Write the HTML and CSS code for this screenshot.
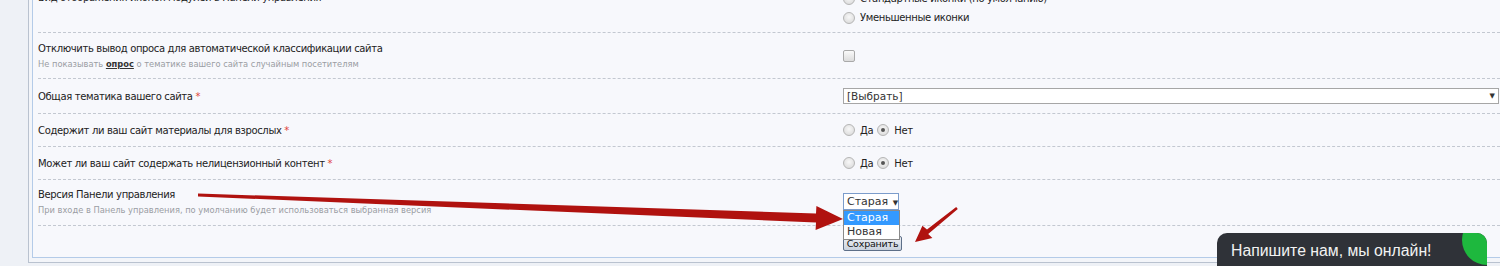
FILE: index.html
```html
<!DOCTYPE html>
<html lang="ru">
<head>
    <meta charset="UTF-8">
    <title>Общие настройки сайта</title>
    <link rel="stylesheet" href="styles.css">
</head>
<body>

<div class="page">
    <div class="frame">
        <div class="panel">

            <div class="row row-top">
                <div class="label">Вид отображения иконок модулей в Панели управления</div>
                <div class="control">
                    <div class="option"><span class="radio"></span>Стандартные иконки (по умолчанию)</div>
                    <div class="option"><span class="radio"></span>Уменьшенные иконки</div>
                </div>
            </div>

            <div class="row row-tall">
                <div class="label">
                    <div class="title">Отключить вывод опроса для автоматической классификации сайта</div>
                    <div class="hint">Не показывать <a href="#">опрос</a> о тематике вашего сайта случайным посетителям</div>
                </div>
                <div class="control control-center">
                    <span class="checkbox"></span>
                </div>
            </div>

            <div class="row row-mid">
                <div class="label">Общая тематика вашего сайта <span class="req">*</span></div>
                <div class="control">
                    <div class="select select-wide">[Выбрать]<span class="caret">&#9660;</span></div>
                </div>
            </div>

            <div class="row row-short">
                <div class="label">Содержит ли ваш сайт материалы для взрослых <span class="req">*</span></div>
                <div class="control">
                    <div class="option">
                        <span class="radio"></span>Да
                        <span class="radio checked"></span>Нет
                    </div>
                </div>
            </div>

            <div class="row row-short">
                <div class="label">Может ли ваш сайт содержать нелицензионный контент <span class="req">*</span></div>
                <div class="control">
                    <div class="option">
                        <span class="radio"></span>Да
                        <span class="radio checked"></span>Нет
                    </div>
                </div>
            </div>

            <div class="row row-version">
                <div class="label">
                    <div class="title">Версия Панели управления</div>
                    <div class="hint">При входе в Панель управления, по умолчанию будет использоваться выбранная версия</div>
                </div>
                <div class="control control-top">
                    <div class="dropdown">
                        <div class="select select-small">Старая <span class="caret">&#9660;</span></div>
                        <ul class="dropdown-list">
                            <li class="active">Старая</li>
                            <li>Новая</li>
                        </ul>
                    </div>
                </div>
            </div>

            <div class="row row-submit">
                <div class="label"></div>
                <div class="control">
                    <button class="btn">Сохранить</button>
                </div>
            </div>

        </div>
    </div>
</div>

<!-- red annotation arrows drawn over the screenshot -->
<svg class="arrows" width="1500" height="266" viewBox="0 0 1500 266">
    <polygon points="198,193.5 816,213.5 816.4,206 843,219 815.6,230 816,222.5 198,196.5" fill="#b0120f"/>
    <polygon points="956.2,207 927,229.5 922.4,225.7 915,242 932.4,238.1 928.2,234 957.8,209" fill="#b0120f"/>
</svg>

<div class="chat">
    <span class="chat-text">Напишите нам, мы онлайн!</span>
    <span class="chat-dot"></span>
</div>

</body>
</html>
```

FILE: styles.css
```css
body {
    margin: 0;
    padding: 0;
    background-color: #eef1f6;
    font-family: "DejaVu Sans", Verdana, sans-serif;
    font-size: 10px;
    letter-spacing: -0.35px;
    color: #222;
    overflow: hidden;
    height: 266px;
    position: relative;
}
.page {
    padding-left: 28px;
    margin-right: -30px;
}
.frame {
    margin-top: -20px;
    border: 1px solid #b9c2cf;
    padding: 3px 3px 4px 3px;
    background-color: #f3f5f9;
}
.panel {
    border: 1px solid #b4cbe8;
    background-color: #f7f8fc;
    padding-left: 5px;
}
.row {
    display: flex;
    border-bottom: 1px dashed #c3c8d1;
}
.label {
    width: 805px;
    flex-shrink: 0;
}
.control {
    flex: 1;
}
.row-top {
    padding: 4px 0 5px;
}
.row-top .label {
    line-height: 17px;
}
.row-top .option {
    line-height: 19px;
}
.row-tall {
    height: 45px;
}
.row-tall .label {
    padding-top: 7px;
}
.title {
    line-height: 17px;
}
.hint {
    font-size: 8.3px;
    letter-spacing: 0;
    line-height: 14px;
    color: #9a9da3;
}
.hint a {
    color: #333;
    font-weight: bold;
    text-decoration: underline;
}
.control-center {
    display: flex;
    align-items: center;
}
.row-mid {
    height: 34px;
    align-items: center;
}
.row-short {
    height: 32px;
    align-items: center;
}
.req {
    color: #e0433b;
}
.option {
    display: flex;
    align-items: center;
    line-height: 17px;
}
.radio {
    display: inline-block;
    width: 10px;
    height: 10px;
    border: 1px solid #b5b5b5;
    border-radius: 50%;
    background: radial-gradient(circle at 50% 40%, #f8f8f8, #d6d6d6);
    margin: 0 5px 0 0;
    position: relative;
}
.option .radio.checked {
    margin-left: 4px;
}
.radio.checked::after {
    content: "";
    position: absolute;
    left: 3px;
    top: 3px;
    width: 4px;
    height: 4px;
    border-radius: 50%;
    background-color: #555;
}
.checkbox {
    display: inline-block;
    width: 10px;
    height: 10px;
    border: 1px solid #a9a9a9;
    border-radius: 2px;
    background: linear-gradient(#fafafa, #dcdcdc);
}
.select {
    background-color: #fff;
    border: 1px solid #a6a6a6;
    height: 14px;
    line-height: 14px;
    padding-left: 3px;
    position: relative;
    font-size: 10.5px;
    letter-spacing: 0;
    color: #333;
    white-space: nowrap;
}
.select-wide {
    width: 651px;
}
.caret {
    font-size: 7px;
    color: #333;
}
.select-wide .caret {
    position: absolute;
    right: 3px;
    top: 0;
}
.row-version {
    height: 45px;
}
.row-version .label {
    padding-top: 6px;
}
.row-version .hint {
    line-height: 15px;
}
.control-top {
    padding-top: 13px;
}
.dropdown {
    position: relative;
    width: 56px;
}
.select-small {
    width: 51px;
    height: 15px;
    line-height: 15px;
    border-color: #7b9ccb;
    font-size: 11px;
}
.select-small .caret {
    margin-left: 1px;
}
.dropdown-list {
    position: absolute;
    left: 0;
    top: 17px;
    width: 55px;
    margin: 0;
    padding: 0;
    list-style: none;
    background-color: #fff;
    border: 1px solid #8a8a8a;
    z-index: 2;
    font-size: 11px;
    letter-spacing: 0;
}
.dropdown-list li {
    height: 14px;
    line-height: 14px;
    padding-left: 3px;
    color: #333;
}
.dropdown-list li.active {
    background-color: #3399ff;
    color: #fff;
}
.row-submit {
    border-bottom: none;
    padding: 10px 0 6px;
}
.btn {
    display: block;
    height: 15px;
    width: 59px;
    padding: 0;
    border: 1px solid #5d6f88;
    border-radius: 2px;
    background: linear-gradient(#eef1f6, #c9d2de);
    font-family: "DejaVu Sans", Verdana, sans-serif;
    font-size: 9.5px;
    letter-spacing: -0.2px;
    color: #111;
    line-height: 12px;
}
.arrows {
    position: absolute;
    left: 0;
    top: 0;
    z-index: 3;
    pointer-events: none;
}
.chat {
    position: absolute;
    left: 1217px;
    top: 233px;
    width: 270px;
    height: 50px;
    background-color: #2f3238;
    border-radius: 10px 10px 0 0;
    overflow: hidden;
    z-index: 4;
    letter-spacing: 0;
}
.chat-text {
    display: block;
    padding: 9px 0 0 14px;
    font-family: "Liberation Sans", Arial, sans-serif;
    font-size: 15.8px;
    color: #f2f2f2;
}
.chat-dot {
    position: absolute;
    left: 245px;
    top: -18px;
    width: 50px;
    height: 50px;
    border-radius: 50%;
    background-color: #1eb83e;
}
```
